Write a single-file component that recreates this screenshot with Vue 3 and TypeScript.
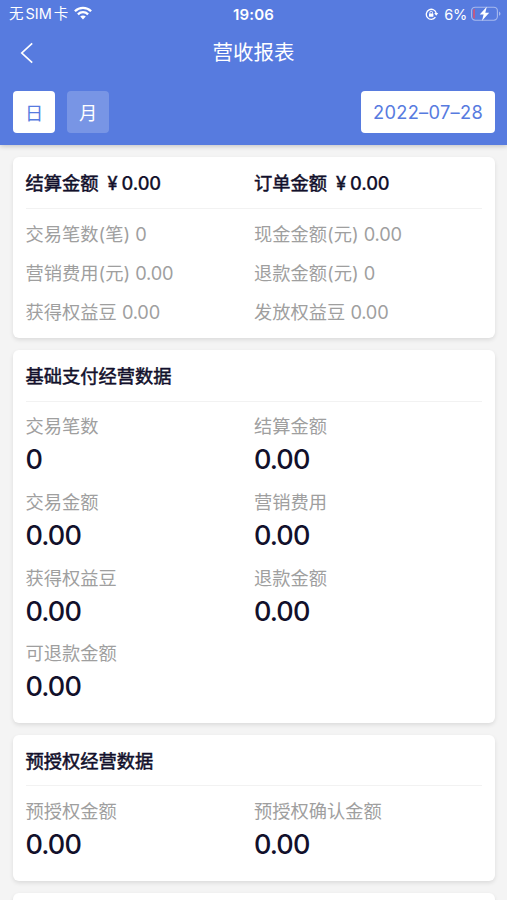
<script setup lang="ts">
import { ref } from 'vue'

interface Metric {
  label: string
  value: string
}

interface Section {
  title: string
  metrics: Metric[]
}

type Period = 'day' | 'month'

const period = ref<Period>('day')
const date = ref('2022–07–28')

const totals: Metric[] = [
  { label: '结算金额', value: '0.00' },
  { label: '订单金额', value: '0.00' },
]

const summary: Metric[] = [
  { label: '交易笔数(笔)', value: '0' },
  { label: '现金金额(元)', value: '0.00' },
  { label: '营销费用(元)', value: '0.00' },
  { label: '退款金额(元)', value: '0' },
  { label: '获得权益豆', value: '0.00' },
  { label: '发放权益豆', value: '0.00' },
]

const sections: Section[] = [
  {
    title: '基础支付经营数据',
    metrics: [
      { label: '交易笔数', value: '0' },
      { label: '结算金额', value: '0.00' },
      { label: '交易金额', value: '0.00' },
      { label: '营销费用', value: '0.00' },
      { label: '获得权益豆', value: '0.00' },
      { label: '退款金额', value: '0.00' },
      { label: '可退款金额', value: '0.00' },
    ],
  },
  {
    title: '预授权经营数据',
    metrics: [
      { label: '预授权金额', value: '0.00' },
      { label: '预授权确认金额', value: '0.00' },
    ],
  },
]
</script>

<template>
  <div class="page">
    <header class="top">
      <div class="status">
        <div class="status-left">
          <span class="carrier">无<span class="sim">SIM</span>卡</span>
          <svg class="wifi" viewBox="0 0 18 14" width="18" height="14">
            <g fill="none" stroke="#fff" stroke-width="2.3">
              <path d="M0.9 5.2C5.4 0.7 12.6 0.7 17.1 5.2" />
              <path d="M3.9 8.3C6.8 5.5 11.2 5.5 14.1 8.3" />
            </g>
            <path d="M6.2 10.6C7.8 9.1 10.2 9.1 11.8 10.6L9 13.5Z" fill="#fff" />
          </svg>
        </div>
        <div class="clock">19:06</div>
        <div class="status-right">
          <svg class="lock" viewBox="0 0 14 12" width="14" height="12">
            <path d="M10.4 9.2A5 5 0 1 1 11.2 5.2" fill="none" stroke="#fff" stroke-width="1.3" />
            <path d="M9.2 5.1H13.2L11.2 7.8Z" fill="#fff" />
            <rect x="4" y="5.5" width="4.4" height="3.2" rx=".5" fill="#fff" />
            <path d="M4.9 5.7V4.6a1.3 1.3 0 0 1 2.6 0v1.1" fill="none" stroke="#fff" stroke-width=".9" />
          </svg>
          <span class="percent">6%</span>
          <svg class="battery" viewBox="0 0 30 16" width="30" height="16">
            <rect x=".6" y="1.2" width="25.8" height="13" rx="3.6" fill="none" stroke="#a7b9ee" stroke-width="1.1" />
            <path d="M2.2 4.5Q2.2 3 3.8 2.8V12.6Q2.2 12.4 2.2 10.9Z" fill="#d85272" />
            <path d="M28 5.6Q29.5 6.3 29.5 7.7T28 9.8Z" fill="#a7b9ee" />
            <path d="M15.8 0.8L8.7 8.5H12.6L11 14.8L18.2 6.7H14.3Z" fill="#fff" />
          </svg>
        </div>
      </div>

      <nav class="nav">
        <button class="back" type="button">
          <svg viewBox="0 0 14 22" width="14" height="22">
            <path d="M12.2 1.4L1.8 11L12.2 20.6" fill="none" stroke="#fff" stroke-width="1.7" />
          </svg>
        </button>
        <h1 class="title">营收报表</h1>
      </nav>

      <div class="filters">
        <button class="period" :class="{ active: period === 'day' }" type="button" @click="period = 'day'">日</button>
        <button class="period" :class="{ active: period === 'month' }" type="button" @click="period = 'month'">月</button>
        <button class="date" type="button">{{ date }}</button>
      </div>
    </header>

    <main class="content">
      <section class="card">
        <div class="head grid">
          <div v-for="item in totals" :key="item.label">
            {{ item.label }}<span class="yen">¥</span><span class="num">{{ item.value }}</span>
          </div>
        </div>
        <div class="summary grid">
          <div v-for="item in summary" :key="item.label" class="row">
            {{ item.label }} <span class="num">{{ item.value }}</span>
          </div>
        </div>
      </section>

      <section v-for="section in sections" :key="section.title" class="card">
        <h2 class="head">{{ section.title }}</h2>
        <div class="metrics grid">
          <div v-for="metric in section.metrics" :key="metric.label" class="metric">
            <div class="label">{{ metric.label }}</div>
            <div class="value">{{ metric.value }}</div>
          </div>
        </div>
      </section>

      <section class="card next"></section>
    </main>
  </div>
</template>

<style>
body {
  margin: 0;
  overflow: hidden;
}
</style>

<style scoped>
.page {
  box-sizing: border-box;
  height: 900px;
  overflow: hidden;
  background: #f4f4f4;
  color: #12102b;
  font-family: Inter, 'Noto Sans CJK SC', sans-serif;
  font-size: 18.25px;
}

button {
  margin: 0;
  padding: 0;
  border: 0;
  background: none;
  font: inherit;
}

.top {
  position: relative;
  height: 145px;
  background: #577bdf;
  color: #fff;
  box-shadow: 0 1px 5px rgba(0, 0, 0, 0.22);
}

.status {
  display: grid;
  grid-template-columns: 1fr auto 1fr;
  align-items: center;
  height: 28px;
  padding: 0 7px 0 9px;
}

.status-left,
.status-right {
  display: flex;
  align-items: center;
}

.status-right {
  justify-content: flex-end;
}

.carrier {
  font-size: 14.5px;
  line-height: 28px;
}

.sim {
  margin: 0 2px;
}

.wifi {
  margin: 0 0 2px 6px;
}

.clock {
  margin-left: -2px;
  font-size: 15px;
  font-weight: 600;
  letter-spacing: 0.2px;
}

.percent {
  margin: 0 4px 0 5px;
  font-size: 14.5px;
  letter-spacing: -0.3px;
}

.battery {
  margin-right: -1px;
}

.nav {
  display: grid;
  grid-template-columns: 60px 1fr 60px;
  align-items: center;
  height: 50px;
}

.back {
  display: flex;
  padding-left: 20px;
}

.title {
  margin: 0;
  font-size: 20.5px;
  font-weight: 400;
  line-height: 48px;
  text-align: center;
}

.filters {
  display: flex;
  gap: 12px;
  padding: 13px 12px 0 13px;
}

.period {
  width: 42px;
  height: 42px;
  border-radius: 4px;
  background: rgba(255, 255, 255, 0.2);
  color: #fff;
}

.period.active,
.date {
  background: #fff;
  color: #577bdf;
}

.date {
  width: 134px;
  height: 42px;
  margin-left: auto;
  border-radius: 4px;
  font-size: 18.25px;
  letter-spacing: 0.3px;
}

.content {
  display: flex;
  flex-direction: column;
  gap: 12px;
  padding: 12px 12.5px 0 13px;
}

.card {
  padding: 0 13px 6.5px 12.5px;
  border-radius: 6px;
  background: #fff;
  box-shadow: 0 2px 4px rgba(0, 0, 0, 0.1);
}

.grid {
  display: grid;
  grid-template-columns: 228.5px 1fr;
}

.head {
  height: 50.5px;
  margin: 0;
  border-bottom: 1px solid #f2f2f2;
  font-size: 18.25px;
  font-weight: 400;
  line-height: 52px;
  -webkit-text-stroke: 0.5px currentColor;
}

.num {
  letter-spacing: -0.2px;
}

.head .num {
  font-weight: 500;
  letter-spacing: -0.1px;
  -webkit-text-stroke-width: 0.2px;
}

.yen {
  margin: 0 4px 0 9px;
}

.summary {
  padding-top: 6px;
  color: #9f9f9f;
}

.row {
  height: 39px;
  line-height: 39px;
}

.metrics {
  padding: 11.5px 0 0.4px;
}

.metric {
  height: 75.75px;
}

.label {
  color: #9f9f9f;
  line-height: 26px;
}

.value {
  font-size: 27px;
  font-weight: 500;
  letter-spacing: -0.9px;
  line-height: 42px;
}

.next {
  height: 40px;
}
</style>
